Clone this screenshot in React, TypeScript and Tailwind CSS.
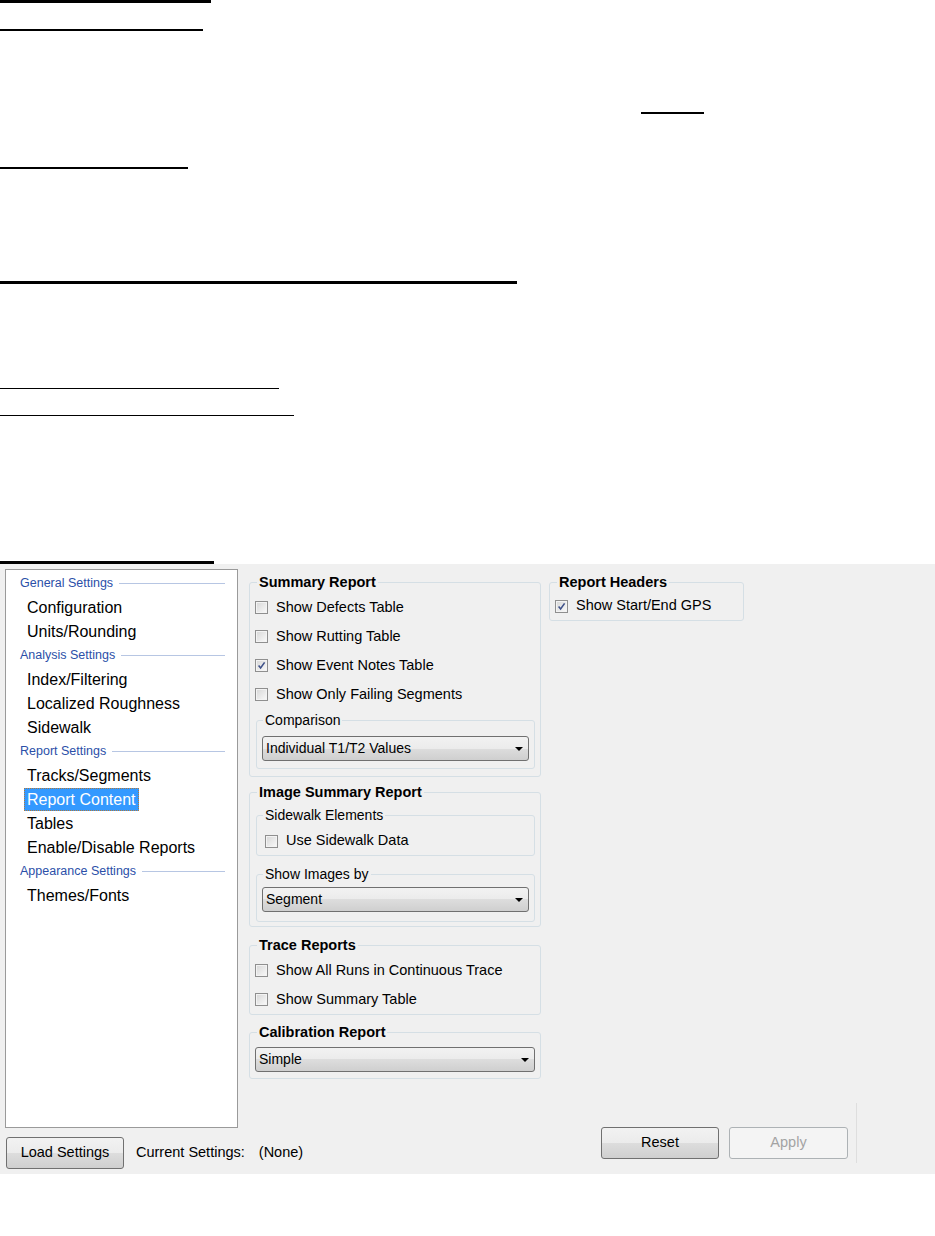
import type { ReactNode } from "react"
import clsx from "clsx"

const navSections: { title: string; items: string[] }[] = [
  { title: "General Settings", items: ["Configuration", "Units/Rounding"] },
  {
    title: "Analysis Settings",
    items: ["Index/Filtering", "Localized Roughness", "Sidewalk"],
  },
  {
    title: "Report Settings",
    items: ["Tracks/Segments", "Report Content", "Tables", "Enable/Disable Reports"],
  },
  { title: "Appearance Settings", items: ["Themes/Fonts"] },
]

const btnFace =
  "rounded-[3px] border border-[#707070] bg-[linear-gradient(#f2f2f2,#ebebeb_50%,#dddddd_50%,#cfcfcf)]"

function Check({ checked }: { checked?: boolean }) {
  return (
    <span className="flex h-[13px] w-[13px] shrink-0 items-center justify-center border border-[#8f8f8f] bg-[linear-gradient(135deg,#d6d6d6,#fafafa)] shadow-[inset_0_0_0_1px_#f3f3f3]">
      {checked && (
        <svg width="9" height="9" viewBox="0 0 9 9">
          <path d="M1.6 4.6 L3.6 7 L7.6 1.4" fill="none" stroke="#3f5189" strokeWidth="1.6" />
        </svg>
      )}
    </span>
  )
}

function CheckRow({ label, checked, className }: { label: string; checked?: boolean; className?: string }) {
  return (
    <div className={clsx("flex items-center gap-[8px] text-[14.5px]", className ?? "h-[29px]")}>
      <Check checked={checked} />
      <span>{label}</span>
    </div>
  )
}

function Group({
  title,
  bold,
  className,
  children,
}: {
  title: string
  bold?: boolean
  className?: string
  children: ReactNode
}) {
  return (
    <fieldset className={clsx("rounded-[3px] border border-[#d5dfe5]", className)}>
      <legend
        className={clsx(
          "px-[2px] leading-[18px]",
          bold ? "ml-[7px] text-[14.5px] font-bold" : "ml-[6px] text-[14px]"
        )}
      >
        {title}
      </legend>
      {children}
    </fieldset>
  )
}

function Select({ value, className }: { value: string; className?: string }) {
  return (
    <div
      className={clsx(
        "flex h-[25px] items-center justify-between pl-[3px] pr-[5px] text-[14px]",
        btnFace,
        className
      )}
    >
      <span>{value}</span>
      <svg width="8" height="4" viewBox="0 0 8 4">
        <path d="M0 0h8L4 4z" fill="#000" />
      </svg>
    </div>
  )
}

function DocLines() {
  return (
    <div className="h-[564px] bg-white">
      <div className="h-[3px] w-[211px] bg-black" />
      <div className="mt-[26px] h-[2px] w-[203px] bg-black" />
      <div className="mt-[81px] ml-[641px] h-[2px] w-[63px] bg-black" />
      <div className="mt-[53px] h-[2px] w-[188px] bg-black" />
      <div className="mt-[112px] h-[3px] w-[517px] bg-black" />
      <div className="mt-[104px] h-px w-[279px] bg-black" />
      <div className="mt-[26px] h-px w-[294px] bg-black" />
      <div className="mt-[145px] h-[3px] w-[214px] bg-black" />
    </div>
  )
}

function NavPanel() {
  return (
    <div className="h-[559px] border border-[#9a9a9a] bg-white pt-px">
      {navSections.map((s) => (
        <div key={s.title}>
          <div className="flex h-[24px] items-center pl-[14px] pr-[12px]">
            <span className="text-[12.5px] text-[#2b4fa8]">{s.title}</span>
            <span className="ml-[6px] h-px flex-1 bg-[#b7c6e3]" />
          </div>
          {s.items.map((it) => (
            <div key={it} className="flex h-[24px] items-center pl-[18px]">
              <span
                className={clsx(
                  "px-[3px] text-[16px] leading-[23px]",
                  it === "Report Content" &&
                    "bg-[#3399ff] text-white outline-1 -outline-offset-1 outline-dotted outline-[#b0783a]"
                )}
              >
                {it}
              </span>
            </div>
          ))}
        </div>
      ))}
    </div>
  )
}

export default function App() {
  return (
    <div className="min-h-[1236px] bg-white font-['Liberation_Sans',Arial,sans-serif] text-black">
      <DocLines />
      <div className="flex h-[610px] bg-[#f0f0f0] pt-[5px] pl-[5px]">
        <div className="flex w-[233px] shrink-0 flex-col">
          <NavPanel />
          <div className="mt-[9px] flex items-center whitespace-nowrap text-[14.5px]">
            <button className={clsx("ml-px h-[32px] w-[118px] shrink-0", btnFace)}>Load Settings</button>
            <span className="ml-[12px] shrink-0">Current Settings:</span>
            <span className="ml-[14px] shrink-0">(None)</span>
          </div>
        </div>

        <div className="ml-[11px] flex w-[608px] flex-col pt-[4px]">
          <div className="flex items-start gap-[8px]">
            <div className="w-[292px]">
              <Group title="Summary Report" bold className="pb-[7px]">
                <div className="px-[5px] pt-[2px]">
                  <CheckRow label="Show Defects Table" />
                  <CheckRow label="Show Rutting Table" />
                  <CheckRow label="Show Event Notes Table" checked />
                  <CheckRow label="Show Only Failing Segments" />
                </div>
                <Group title="Comparison" className="mt-[2px] ml-[6px] mr-[5px] pb-[7px]">
                  <Select value="Individual T1/T2 Values" className="mx-[5px] mt-[7px]" />
                </Group>
              </Group>

              <Group title="Image Summary Report" bold className="mt-[6px] pb-[4px]">
                <Group title="Sidewalk Elements" className="mt-[5px] ml-[6px] mr-[5px] pb-[2px]">
                  <CheckRow label="Use Sidewalk Data" className="mt-[5px] h-[24px] pl-[8px]" />
                </Group>
                <Group title="Show Images by" className="mt-[9px] ml-[6px] mr-[5px] pb-[9px]">
                  <Select value="Segment" className="mx-[5px] mt-[4px]" />
                </Group>
              </Group>

              <Group title="Trace Reports" bold className="mt-[9px]">
                <div className="px-[5px] pt-[2px]">
                  <CheckRow label="Show All Runs in Continuous Trace" />
                  <CheckRow label="Show Summary Table" />
                </div>
              </Group>

              <Group title="Calibration Report" bold className="mt-[8px] pb-[6px]">
                <Select value="Simple" className="mx-[5px] mt-[6px]" />
              </Group>
            </div>

            <div className="w-[195px]">
              <Group title="Report Headers" bold>
                <CheckRow label="Show Start/End GPS" checked className="mt-px h-[28px] pl-[5px]" />
              </Group>
            </div>
          </div>

          <div className="mt-auto mb-[11px] flex h-[60px] items-end justify-end gap-[10px] border-r border-[#dedede] pr-[8px] pb-[4px] text-[14.5px]">
            <button className={clsx("h-[32px] w-[118px]", btnFace)}>Reset</button>
            <button className="h-[32px] w-[119px] rounded-[3px] border border-[#adb2b5] bg-[#f4f4f4] text-[#a3a3a3]">
              Apply
            </button>
          </div>
        </div>
      </div>
    </div>
  )
}
